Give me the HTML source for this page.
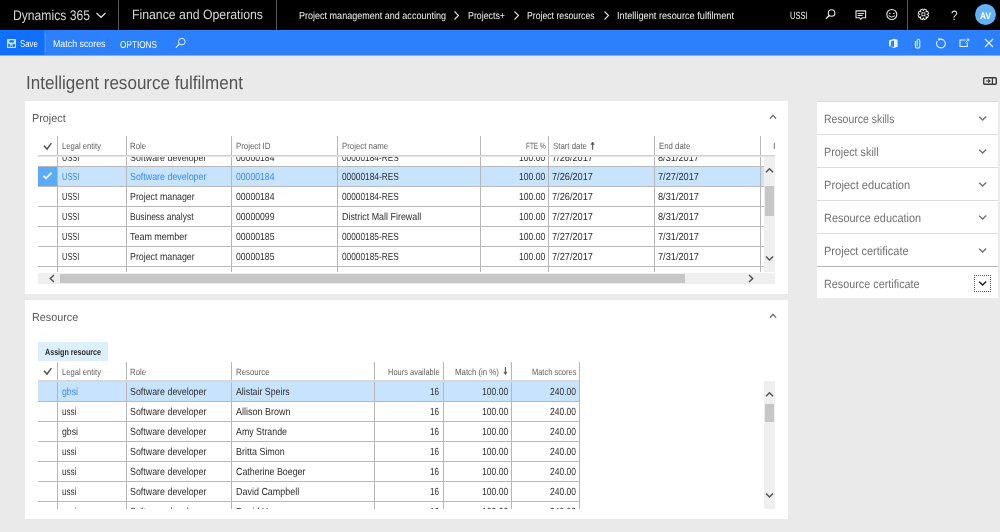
<!DOCTYPE html>
<html><head><meta charset="utf-8"><style>
html,body{margin:0;padding:0;width:1000px;height:532px;overflow:hidden;background:#eaeaea}
body{position:relative;font-family:"Liberation Sans", sans-serif;}
span{position:absolute;white-space:pre;text-rendering:geometricPrecision;}
.c{position:absolute;overflow:hidden}
</style></head><body>
<div id="root" style="position:absolute;left:0;top:0;width:1000px;height:532px;background:#eaeaea;overflow:hidden;will-change:transform">
<div style="position:absolute;left:0px;top:0px;width:1000px;height:30px;background:#000;"></div>
<span style="left:12.70px;top:8px;font-size:14px;line-height:15.638px;color:#d8d8d8;transform:scaleX(0.8681);transform-origin:0 0;">Dynamics 365</span>
<svg style="position:absolute;left:95px;top:11px" width="12" height="8"><path d="M1.5 2 L6 6.3 L10.5 2" stroke="#e0e0e0" stroke-width="1.2" fill="none"/></svg>
<div style="position:absolute;left:118px;top:0px;width:1px;height:30px;background:#5a5a5a;"></div>
<span style="left:132.00px;top:7px;font-size:13.5px;line-height:15.079px;color:#d8d8d8;transform:scaleX(0.9091);transform-origin:0 0;">Finance and Operations</span>
<div style="position:absolute;left:276px;top:0px;width:1px;height:30px;background:#5a5a5a;"></div>
<span style="left:298.70px;top:11px;font-size:10.25px;line-height:11.449px;color:#f0f0f0;transform:scaleX(0.8805);transform-origin:0 0;">Project management and accounting</span>
<svg style="position:absolute;left:453px;top:10px" width="8" height="11"><path d="M1.5 1.5 L5.5 5.5 L1.5 9.5" stroke="#e0e0e0" stroke-width="1.1" fill="none"/></svg>
<span style="left:467.70px;top:11px;font-size:10.25px;line-height:11.449px;color:#f0f0f0;transform:scaleX(0.8602);transform-origin:0 0;">Projects+</span>
<svg style="position:absolute;left:513px;top:10px" width="8" height="11"><path d="M1.5 1.5 L5.5 5.5 L1.5 9.5" stroke="#e0e0e0" stroke-width="1.1" fill="none"/></svg>
<span style="left:527.30px;top:11px;font-size:10.25px;line-height:11.449px;color:#f0f0f0;transform:scaleX(0.8475);transform-origin:0 0;">Project resources</span>
<svg style="position:absolute;left:603px;top:10px" width="8" height="11"><path d="M1.5 1.5 L5.5 5.5 L1.5 9.5" stroke="#e0e0e0" stroke-width="1.1" fill="none"/></svg>
<span style="left:617.00px;top:11px;font-size:10.25px;line-height:11.449px;color:#f0f0f0;transform:scaleX(0.8968);transform-origin:0 0;">Intelligent resource fulfilment</span>
<span style="left:790.00px;top:11px;font-size:10.5px;line-height:11.729px;color:#f0f0f0;transform:scaleX(0.7138);transform-origin:0 0;">USSI</span>
<svg style="position:absolute;left:824px;top:7px" width="14" height="15"><circle cx="7.6" cy="6" r="3.3" stroke="#e8e8e8" stroke-width="1.1" fill="none"/><path d="M5.2 8.5 L2 11.8" stroke="#e8e8e8" stroke-width="1.3"/></svg>
<svg style="position:absolute;left:853px;top:8px" width="16" height="14"><path d="M3 2.9 H12.6 V9.7 H9.3 L7.8 11.3 L6.3 9.7 H3 Z" stroke="#e8e8e8" stroke-width="1.1" fill="none"/><path d="M4.6 5.6 H11 M4.6 7.5 H9.6" stroke="#e8e8e8" stroke-width="1"/></svg>
<svg style="position:absolute;left:884px;top:7px" width="16" height="16"><circle cx="7.8" cy="7.5" r="5.0" stroke="#e8e8e8" stroke-width="1.1" fill="none"/><path d="M5.1 6.4 H6.6 M9 6.4 H10.5" stroke="#e8e8e8" stroke-width="1"/><path d="M4.6 8.7 Q7.8 11.6 11 8.7" stroke="#e8e8e8" stroke-width="1" fill="none"/></svg>
<div style="position:absolute;left:907px;top:0px;width:1px;height:30px;background:#5a5a5a;"></div>
<svg style="position:absolute;left:916px;top:7px" width="15" height="15"><g transform="translate(7.4 7.3) rotate(22.5)" stroke="#e8e8e8" fill="none" stroke-width="0.95"><path d="M3.44 -1.37 L5.17 -1.18 L5.17 1.18 L3.44 1.37 L3.40 1.46 L4.49 2.82 L2.82 4.49 L1.46 3.40 L1.37 3.44 L1.18 5.17 L-1.18 5.17 L-1.37 3.44 L-1.46 3.40 L-2.82 4.49 L-4.49 2.82 L-3.40 1.46 L-3.44 1.37 L-5.17 1.18 L-5.17 -1.18 L-3.44 -1.37 L-3.40 -1.46 L-4.49 -2.82 L-2.82 -4.49 L-1.46 -3.40 L-1.37 -3.44 L-1.18 -5.17 L1.18 -5.17 L1.37 -3.44 L1.46 -3.40 L2.82 -4.49 L4.49 -2.82 L3.40 -1.46 Z"/></g><rect x="5.9" y="5.8" width="3" height="3" stroke="#e8e8e8" stroke-width="0.9" fill="none"/></svg>
<span style="left:950.60px;top:8px;font-size:13.5px;line-height:15.079px;color:#e0e0e0;transform:scaleX(0.8782);transform-origin:0 0;">?</span>
<div style="position:absolute;left:975px;top:3.6px;width:21.2px;height:21.2px;border-radius:50%;background:#60b3f8"></div>
<span style="left:979.90px;top:12px;font-size:9.5px;line-height:10.611px;color:#ffffff;font-weight:700;transform:scaleX(0.8880);transform-origin:0 0;">AV</span>
<div style="position:absolute;left:0px;top:30px;width:1000px;height:25px;background:#2c80fb;"></div>
<div style="position:absolute;left:0px;top:30px;width:44px;height:25px;background:#1170fb;"></div>
<div style="position:absolute;left:0px;top:55px;width:1000px;height:1px;background:#7fb0f5;"></div>
<div style="position:absolute;left:45px;top:33px;width:1px;height:20px;background:#4f93f0;"></div>
<svg style="position:absolute;left:7px;top:39px" width="9" height="9"><rect x="0" y="0" width="9" height="9" rx="0.6" fill="#c9dffd"/><rect x="2.3" y="1.3" width="4.6" height="2.3" rx="0.8" fill="#1170fb"/><rect x="1.2" y="4.9" width="1.7" height="3.0" fill="#1170fb"/><rect x="5.6" y="4.9" width="2.3" height="3.0" fill="#1170fb"/><rect x="3.4" y="6.5" width="1.6" height="1.4" fill="#1170fb"/></svg>
<span style="left:20.00px;top:39px;font-size:10px;line-height:11.170px;color:#ffffff;transform:scaleX(0.7808);transform-origin:0 0;">Save</span>
<span style="left:52.80px;top:39px;font-size:10px;line-height:11.170px;color:#ffffff;transform:scaleX(0.8828);transform-origin:0 0;">Match scores</span>
<span style="left:119.50px;top:40px;font-size:10px;line-height:11.170px;color:#ffffff;transform:scaleX(0.8219);transform-origin:0 0;">OPTIONS</span>
<svg style="position:absolute;left:174px;top:37px" width="13" height="12"><circle cx="7.8" cy="4.6" r="3.3" stroke="#e6f0fe" stroke-width="1" fill="none"/><path d="M5.4 7 L1.8 10.6" stroke="#e6f0fe" stroke-width="1.1"/></svg>
<svg style="position:absolute;left:888px;top:38px" width="11" height="11"><path d="M1 2.6 L6 0.8 L9.6 1.8 V8.8 L6 10 L1 8.3 L6 8.9 V2.4 L3 3.3 V7.6 L1 8.3 Z" fill="#e8f1fe"/></svg>
<svg style="position:absolute;left:914px;top:38px" width="8" height="11"><path d="M3.2 8.6 V3.2 Q3.2 1.2 4.5 1.2 Q5.8 1.2 5.8 3.2 V8.4 Q5.8 10.1 3.6 10.1 Q1.4 10.1 1.4 8.4 V3" stroke="#e8f1fe" stroke-width="1.05" fill="none"/></svg>
<svg style="position:absolute;left:934px;top:37px" width="14" height="13"><path d="M5.4 2.37 A4.4 4.4 0 1 1 3.09 4.3" stroke="#e8f1fe" stroke-width="1.1" fill="none"/><path d="M4.2 0.9 L6.9 2.3 L4.5 4.0 Z" fill="#e8f1fe"/></svg>
<svg style="position:absolute;left:959px;top:38px" width="11" height="10"><path d="M6.5 2 H1 V8.5 H8.3 V4.5" stroke="#e8f1fe" stroke-width="1.1" fill="none"/><path d="M6.5 4.5 L9.6 1.2 M7.6 1.2 H9.8 V3.2" stroke="#e8f1fe" stroke-width="1" fill="none"/></svg>
<svg style="position:absolute;left:984px;top:38px" width="10" height="10"><path d="M1 1 L9 9 M9 1 L1 9" stroke="#e8f1fe" stroke-width="1.1"/></svg>
<span style="left:26.00px;top:73px;font-size:18.75px;line-height:20.944px;color:#555555;transform:scaleX(0.9092);transform-origin:0 0;">Intelligent resource fulfilment</span>
<svg style="position:absolute;left:982px;top:76px" width="16" height="10"><rect x="1.7" y="1.7" width="12.6" height="6.6" rx="1" stroke="#3a3a3a" stroke-width="1.4" fill="none"/><path d="M10.4 2 V8" stroke="#3a3a3a" stroke-width="1.2"/><path d="M4 5 H7.5 M6.2 3.4 L8 5 L6.2 6.6" stroke="#3a3a3a" stroke-width="1.1" fill="none"/></svg>
<div style="position:absolute;left:817px;top:101px;width:181px;height:197px;background:#ffffff;"></div>
<div style="position:absolute;left:817px;top:101px;width:181px;height:1px;background:#dcdcdc;"></div>
<span style="left:824.00px;top:113px;font-size:12px;line-height:13.404px;color:#727272;transform:scaleX(0.8723);transform-origin:0 0;">Resource skills</span>
<svg style="position:absolute;left:977px;top:115px" width="11" height="8"><path d="M2.2 1.7 L5.6 5.0 L9.2 1.5" stroke="#707070" stroke-width="1.4" fill="none"/></svg>
<div style="position:absolute;left:817px;top:134px;width:181px;height:1px;background:#dcdcdc;"></div>
<span style="left:824.00px;top:146px;font-size:12px;line-height:13.404px;color:#727272;transform:scaleX(0.8997);transform-origin:0 0;">Project skill</span>
<svg style="position:absolute;left:977px;top:148px" width="11" height="8"><path d="M2.2 1.7 L5.6 5.0 L9.2 1.5" stroke="#707070" stroke-width="1.4" fill="none"/></svg>
<div style="position:absolute;left:817px;top:167px;width:181px;height:1px;background:#dcdcdc;"></div>
<span style="left:824.00px;top:179px;font-size:12px;line-height:13.404px;color:#727272;transform:scaleX(0.9306);transform-origin:0 0;">Project education</span>
<svg style="position:absolute;left:977px;top:181px" width="11" height="8"><path d="M2.2 1.7 L5.6 5.0 L9.2 1.5" stroke="#707070" stroke-width="1.4" fill="none"/></svg>
<div style="position:absolute;left:817px;top:200px;width:181px;height:1px;background:#dcdcdc;"></div>
<span style="left:824.00px;top:212px;font-size:12px;line-height:13.404px;color:#727272;transform:scaleX(0.9097);transform-origin:0 0;">Resource education</span>
<svg style="position:absolute;left:977px;top:214px" width="11" height="8"><path d="M2.2 1.7 L5.6 5.0 L9.2 1.5" stroke="#707070" stroke-width="1.4" fill="none"/></svg>
<div style="position:absolute;left:817px;top:233px;width:181px;height:1px;background:#dcdcdc;"></div>
<span style="left:824.00px;top:245px;font-size:12px;line-height:13.404px;color:#727272;transform:scaleX(0.9202);transform-origin:0 0;">Project certificate</span>
<svg style="position:absolute;left:977px;top:247px" width="11" height="8"><path d="M2.2 1.7 L5.6 5.0 L9.2 1.5" stroke="#707070" stroke-width="1.4" fill="none"/></svg>
<div style="position:absolute;left:817px;top:266px;width:181px;height:1px;background:#b4b4b4;"></div>
<span style="left:824.00px;top:278px;font-size:12px;line-height:13.404px;color:#727272;transform:scaleX(0.9015);transform-origin:0 0;">Resource certificate</span>
<svg style="position:absolute;left:977px;top:280px" width="11" height="8"><path d="M2.2 1.7 L5.6 5.0 L9.2 1.5" stroke="#1a1a1a" stroke-width="1.4" fill="none"/></svg>
<div style="position:absolute;left:974px;top:275px;width:17px;height:17px;border:1px dotted #555;box-sizing:border-box"></div>
<div style="position:absolute;left:25px;top:101px;width:763px;height:193px;background:#ffffff;"></div>
<span style="left:32.40px;top:113px;font-size:11.5px;line-height:12.845px;color:#5a5a5a;transform:scaleX(0.9400);transform-origin:0 0;">Project</span>
<svg style="position:absolute;left:768px;top:113px" width="11" height="8"><path d="M1.9 5.6 L5 2.4 L8.1 5.6" stroke="#5e5e5e" stroke-width="1.3" fill="none"/></svg>
<div style="position:absolute;left:25px;top:300px;width:763px;height:219px;background:#ffffff;"></div>
<span style="left:32.40px;top:312px;font-size:11.5px;line-height:12.845px;color:#5a5a5a;transform:scaleX(0.9400);transform-origin:0 0;">Resource</span>
<svg style="position:absolute;left:768px;top:312px" width="11" height="8"><path d="M1.9 5.6 L5 2.4 L8.1 5.6" stroke="#5e5e5e" stroke-width="1.3" fill="none"/></svg>
<div style="position:absolute;left:57px;top:136px;width:1px;height:136px;background:#b6b6b6;"></div>
<div style="position:absolute;left:126px;top:136px;width:1px;height:136px;background:#b6b6b6;"></div>
<div style="position:absolute;left:231px;top:136px;width:1px;height:136px;background:#b6b6b6;"></div>
<div style="position:absolute;left:337px;top:136px;width:1px;height:136px;background:#b6b6b6;"></div>
<div style="position:absolute;left:480px;top:136px;width:1px;height:136px;background:#b6b6b6;"></div>
<div style="position:absolute;left:548px;top:136px;width:1px;height:136px;background:#b6b6b6;"></div>
<div style="position:absolute;left:654px;top:136px;width:1px;height:136px;background:#b6b6b6;"></div>
<div style="position:absolute;left:760px;top:136px;width:1px;height:136px;background:#b6b6b6;"></div>
<svg style="position:absolute;left:42px;top:142px" width="11" height="9"><path d="M2 3.9 L5.1 7 L9.4 1.1" stroke="#555" stroke-width="1.5" fill="none"/></svg>
<span style="left:62.00px;top:141px;font-size:9px;line-height:10.053px;color:#626262;transform:scaleX(0.8470);transform-origin:0 0;">Legal entity</span>
<span style="left:130.00px;top:141px;font-size:9px;line-height:10.053px;color:#626262;transform:scaleX(0.8700);transform-origin:0 0;">Role</span>
<span style="left:236.00px;top:141px;font-size:9px;line-height:10.053px;color:#626262;transform:scaleX(0.8700);transform-origin:0 0;">Project ID</span>
<span style="left:342.00px;top:141px;font-size:9px;line-height:10.053px;color:#626262;transform:scaleX(0.8700);transform-origin:0 0;">Project name</span>
<span style="left:525.60px;top:141px;font-size:9px;line-height:10.053px;color:#626262;transform:scaleX(0.7160);transform-origin:0 0;">FTE %</span>
<span style="left:552.70px;top:141px;font-size:9px;line-height:10.053px;color:#626262;transform:scaleX(0.8700);transform-origin:0 0;">Start date</span>
<svg style="position:absolute;left:589px;top:140px" width="7" height="11"><path d="M3.6 2.6 V9.7" stroke="#585858" stroke-width="1.1" fill="none"/><path d="M1.9 4.4 L3.6 2.0 L5.3 4.4 Z" fill="#585858" stroke="#585858" stroke-width="0.6"/></svg>
<span style="left:659.00px;top:141px;font-size:9px;line-height:10.053px;color:#626262;transform:scaleX(0.8700);transform-origin:0 0;">End date</span>
<span style="left:773.00px;top:141px;font-size:9px;line-height:10.053px;color:#626262;">I</span>
<div class="c" style="left:38px;top:156px;width:726px;height:116px">
<div style="position:absolute;left:0px;top:11px;width:726px;height:19px;background:#c7e3fd;"></div>
<div style="position:absolute;left:0px;top:11px;width:19px;height:19px;background:#5aacf6;"></div>
<svg style="position:absolute;left:4px;top:15px" width="11" height="10"><path d="M1.4 4.8 L4 7.4 L9.6 1.6" stroke="#fff" stroke-width="1.6" fill="none"/></svg>
<div style="position:absolute;left:19px;top:0px;width:1px;height:116px;background:#b6b6b6;"></div>
<div style="position:absolute;left:88px;top:0px;width:1px;height:116px;background:#b6b6b6;"></div>
<div style="position:absolute;left:193px;top:0px;width:1px;height:116px;background:#b6b6b6;"></div>
<div style="position:absolute;left:299px;top:0px;width:1px;height:116px;background:#b6b6b6;"></div>
<div style="position:absolute;left:442px;top:0px;width:1px;height:116px;background:#b6b6b6;"></div>
<div style="position:absolute;left:510px;top:0px;width:1px;height:116px;background:#b6b6b6;"></div>
<div style="position:absolute;left:616px;top:0px;width:1px;height:116px;background:#b6b6b6;"></div>
<div style="position:absolute;left:722px;top:0px;width:1px;height:116px;background:#b6b6b6;"></div>
<div style="position:absolute;left:0px;top:10px;width:726px;height:1px;background:#b8b8b8;"></div>
<span style="left:24.00px;top:-3px;font-size:10.25px;line-height:11.449px;color:#2e2e2e;transform:scaleX(0.7269);transform-origin:0 0;">USSI</span>
<span style="left:92.00px;top:-3px;font-size:10.25px;line-height:11.449px;color:#2e2e2e;transform:scaleX(0.8650);transform-origin:0 0;">Software developer</span>
<span style="left:198.00px;top:-3px;font-size:10.25px;line-height:11.449px;color:#2e2e2e;transform:scaleX(0.8441);transform-origin:0 0;">00000184</span>
<span style="left:304.00px;top:-3px;font-size:10.25px;line-height:11.449px;color:#2e2e2e;transform:scaleX(0.8089);transform-origin:0 0;">00000184-RES</span>
<span style="left:481.30px;top:-3px;font-size:10.25px;line-height:11.449px;color:#2e2e2e;transform:scaleX(0.8355);transform-origin:0 0;">100.00</span>
<span style="left:514.10px;top:-3px;font-size:10.25px;line-height:11.449px;color:#2e2e2e;transform:scaleX(0.8989);transform-origin:0 0;">7/26/2017</span>
<span style="left:620.00px;top:-3px;font-size:10.25px;line-height:11.449px;color:#2e2e2e;transform:scaleX(0.8989);transform-origin:0 0;">8/31/2017</span>
<div style="position:absolute;left:0px;top:30px;width:726px;height:1px;background:#b8b8b8;"></div>
<span style="left:24.00px;top:16px;font-size:10.25px;line-height:11.449px;color:#3a8cf2;transform:scaleX(0.7269);transform-origin:0 0;">USSI</span>
<span style="left:92.00px;top:16px;font-size:10.25px;line-height:11.449px;color:#3a8cf2;transform:scaleX(0.8650);transform-origin:0 0;">Software developer</span>
<span style="left:198.00px;top:16px;font-size:10.25px;line-height:11.449px;color:#3a8cf2;transform:scaleX(0.8441);transform-origin:0 0;">00000184</span>
<span style="left:304.00px;top:16px;font-size:10.25px;line-height:11.449px;color:#2e2e2e;transform:scaleX(0.8089);transform-origin:0 0;">00000184-RES</span>
<span style="left:481.30px;top:16px;font-size:10.25px;line-height:11.449px;color:#2e2e2e;transform:scaleX(0.8355);transform-origin:0 0;">100.00</span>
<span style="left:514.10px;top:16px;font-size:10.25px;line-height:11.449px;color:#2e2e2e;transform:scaleX(0.8989);transform-origin:0 0;">7/26/2017</span>
<span style="left:620.00px;top:16px;font-size:10.25px;line-height:11.449px;color:#2e2e2e;transform:scaleX(0.8989);transform-origin:0 0;">7/27/2017</span>
<div style="position:absolute;left:0px;top:50px;width:726px;height:1px;background:#b8b8b8;"></div>
<span style="left:24.00px;top:36px;font-size:10.25px;line-height:11.449px;color:#2e2e2e;transform:scaleX(0.7269);transform-origin:0 0;">USSI</span>
<span style="left:92.00px;top:36px;font-size:10.25px;line-height:11.449px;color:#2e2e2e;transform:scaleX(0.8602);transform-origin:0 0;">Project manager</span>
<span style="left:198.00px;top:36px;font-size:10.25px;line-height:11.449px;color:#2e2e2e;transform:scaleX(0.8441);transform-origin:0 0;">00000184</span>
<span style="left:304.00px;top:36px;font-size:10.25px;line-height:11.449px;color:#2e2e2e;transform:scaleX(0.8089);transform-origin:0 0;">00000184-RES</span>
<span style="left:481.30px;top:36px;font-size:10.25px;line-height:11.449px;color:#2e2e2e;transform:scaleX(0.8355);transform-origin:0 0;">100.00</span>
<span style="left:514.10px;top:36px;font-size:10.25px;line-height:11.449px;color:#2e2e2e;transform:scaleX(0.8989);transform-origin:0 0;">7/26/2017</span>
<span style="left:620.00px;top:36px;font-size:10.25px;line-height:11.449px;color:#2e2e2e;transform:scaleX(0.8989);transform-origin:0 0;">8/31/2017</span>
<div style="position:absolute;left:0px;top:70px;width:726px;height:1px;background:#b8b8b8;"></div>
<span style="left:24.00px;top:56px;font-size:10.25px;line-height:11.449px;color:#2e2e2e;transform:scaleX(0.7269);transform-origin:0 0;">USSI</span>
<span style="left:92.00px;top:56px;font-size:10.25px;line-height:11.449px;color:#2e2e2e;transform:scaleX(0.8255);transform-origin:0 0;">Business analyst</span>
<span style="left:198.00px;top:56px;font-size:10.25px;line-height:11.449px;color:#2e2e2e;transform:scaleX(0.8441);transform-origin:0 0;">00000099</span>
<span style="left:304.00px;top:56px;font-size:10.25px;line-height:11.449px;color:#2e2e2e;transform:scaleX(0.8691);transform-origin:0 0;">District Mall Firewall</span>
<span style="left:481.30px;top:56px;font-size:10.25px;line-height:11.449px;color:#2e2e2e;transform:scaleX(0.8355);transform-origin:0 0;">100.00</span>
<span style="left:514.10px;top:56px;font-size:10.25px;line-height:11.449px;color:#2e2e2e;transform:scaleX(0.8989);transform-origin:0 0;">7/27/2017</span>
<span style="left:620.00px;top:56px;font-size:10.25px;line-height:11.449px;color:#2e2e2e;transform:scaleX(0.8989);transform-origin:0 0;">8/31/2017</span>
<div style="position:absolute;left:0px;top:90px;width:726px;height:1px;background:#b8b8b8;"></div>
<span style="left:24.00px;top:76px;font-size:10.25px;line-height:11.449px;color:#2e2e2e;transform:scaleX(0.7269);transform-origin:0 0;">USSI</span>
<span style="left:92.00px;top:76px;font-size:10.25px;line-height:11.449px;color:#2e2e2e;transform:scaleX(0.8731);transform-origin:0 0;">Team member</span>
<span style="left:198.00px;top:76px;font-size:10.25px;line-height:11.449px;color:#2e2e2e;transform:scaleX(0.8441);transform-origin:0 0;">00000185</span>
<span style="left:304.00px;top:76px;font-size:10.25px;line-height:11.449px;color:#2e2e2e;transform:scaleX(0.8089);transform-origin:0 0;">00000185-RES</span>
<span style="left:481.30px;top:76px;font-size:10.25px;line-height:11.449px;color:#2e2e2e;transform:scaleX(0.8355);transform-origin:0 0;">100.00</span>
<span style="left:514.10px;top:76px;font-size:10.25px;line-height:11.449px;color:#2e2e2e;transform:scaleX(0.8989);transform-origin:0 0;">7/27/2017</span>
<span style="left:620.00px;top:76px;font-size:10.25px;line-height:11.449px;color:#2e2e2e;transform:scaleX(0.8989);transform-origin:0 0;">7/31/2017</span>
<div style="position:absolute;left:0px;top:110px;width:726px;height:1px;background:#b8b8b8;"></div>
<span style="left:24.00px;top:96px;font-size:10.25px;line-height:11.449px;color:#2e2e2e;transform:scaleX(0.7269);transform-origin:0 0;">USSI</span>
<span style="left:92.00px;top:96px;font-size:10.25px;line-height:11.449px;color:#2e2e2e;transform:scaleX(0.8602);transform-origin:0 0;">Project manager</span>
<span style="left:198.00px;top:96px;font-size:10.25px;line-height:11.449px;color:#2e2e2e;transform:scaleX(0.8441);transform-origin:0 0;">00000185</span>
<span style="left:304.00px;top:96px;font-size:10.25px;line-height:11.449px;color:#2e2e2e;transform:scaleX(0.8089);transform-origin:0 0;">00000185-RES</span>
<span style="left:481.30px;top:96px;font-size:10.25px;line-height:11.449px;color:#2e2e2e;transform:scaleX(0.8355);transform-origin:0 0;">100.00</span>
<span style="left:514.10px;top:96px;font-size:10.25px;line-height:11.449px;color:#2e2e2e;transform:scaleX(0.8989);transform-origin:0 0;">7/27/2017</span>
<span style="left:620.00px;top:96px;font-size:10.25px;line-height:11.449px;color:#2e2e2e;transform:scaleX(0.8989);transform-origin:0 0;">7/31/2017</span>
<div style="position:absolute;left:0px;top:130px;width:726px;height:1px;background:#b8b8b8;"></div>
<span style="left:24.00px;top:116px;font-size:10.25px;line-height:11.449px;color:#2e2e2e;transform:scaleX(0.7269);transform-origin:0 0;">USSI</span>
<span style="left:92.00px;top:116px;font-size:10.25px;line-height:11.449px;color:#2e2e2e;transform:scaleX(0.8255);transform-origin:0 0;">Business analyst</span>
<span style="left:198.00px;top:116px;font-size:10.25px;line-height:11.449px;color:#2e2e2e;transform:scaleX(0.8441);transform-origin:0 0;">00000185</span>
<span style="left:304.00px;top:116px;font-size:10.25px;line-height:11.449px;color:#2e2e2e;transform:scaleX(0.8089);transform-origin:0 0;">00000185-RES</span>
<span style="left:481.30px;top:116px;font-size:10.25px;line-height:11.449px;color:#2e2e2e;transform:scaleX(0.8355);transform-origin:0 0;">100.00</span>
<span style="left:514.10px;top:116px;font-size:10.25px;line-height:11.449px;color:#2e2e2e;transform:scaleX(0.8989);transform-origin:0 0;">7/27/2017</span>
<span style="left:620.00px;top:116px;font-size:10.25px;line-height:11.449px;color:#2e2e2e;transform:scaleX(0.8989);transform-origin:0 0;">7/31/2017</span>
</div>
<div style="position:absolute;left:38px;top:155px;width:737px;height:1px;background:#d2d2d2;"></div>
<div style="position:absolute;left:38px;top:156px;width:737px;height:1px;background:#e4e4e4;"></div>
<div style="position:absolute;left:764px;top:157px;width:11px;height:115px;background:#efefef;"></div>
<div style="position:absolute;left:765px;top:186px;width:9px;height:30px;background:#c6c6c6;"></div>
<svg style="position:absolute;left:765px;top:167px" width="9" height="7"><path d="M1 5.2 L4.5 1.7 L8 5.2" stroke="#555" stroke-width="1.5" fill="none"/></svg>
<svg style="position:absolute;left:765px;top:255px" width="9" height="7"><path d="M1 1.5 L4.5 5 L8 1.5" stroke="#555" stroke-width="1.5" fill="none"/></svg>
<div style="position:absolute;left:38px;top:273px;width:737px;height:11px;background:#efefef;"></div>
<div style="position:absolute;left:60px;top:274px;width:625px;height:9px;background:#c6c6c6;"></div>
<svg style="position:absolute;left:48px;top:274px" width="8" height="9"><path d="M6 1 L2.3 4.5 L6 8" stroke="#555" stroke-width="1.5" fill="none"/></svg>
<svg style="position:absolute;left:747px;top:274px" width="8" height="9"><path d="M2 1 L5.7 4.5 L2 8" stroke="#555" stroke-width="1.5" fill="none"/></svg>
<div style="position:absolute;left:38px;top:342px;width:70px;height:19px;background:#dcefff;"></div>
<span style="left:45.40px;top:347px;font-size:9px;line-height:10.053px;color:#2a2a2a;font-weight:700;transform:scaleX(0.7940);transform-origin:0 0;">Assign resource</span>
<div style="position:absolute;left:57px;top:362px;width:1px;height:147px;background:#b6b6b6;"></div>
<div style="position:absolute;left:126px;top:362px;width:1px;height:147px;background:#b6b6b6;"></div>
<div style="position:absolute;left:231px;top:362px;width:1px;height:147px;background:#b6b6b6;"></div>
<div style="position:absolute;left:374px;top:362px;width:1px;height:147px;background:#b6b6b6;"></div>
<div style="position:absolute;left:443px;top:362px;width:1px;height:147px;background:#b6b6b6;"></div>
<div style="position:absolute;left:511px;top:362px;width:1px;height:147px;background:#b6b6b6;"></div>
<div style="position:absolute;left:579px;top:362px;width:1px;height:147px;background:#b6b6b6;"></div>
<svg style="position:absolute;left:42px;top:367px" width="11" height="9"><path d="M2 3.9 L5.1 7 L9.4 1.1" stroke="#555" stroke-width="1.5" fill="none"/></svg>
<span style="left:62.00px;top:367px;font-size:9px;line-height:10.053px;color:#626262;transform:scaleX(0.8470);transform-origin:0 0;">Legal entity</span>
<span style="left:130.00px;top:367px;font-size:9px;line-height:10.053px;color:#626262;transform:scaleX(0.8700);transform-origin:0 0;">Role</span>
<span style="left:236.00px;top:367px;font-size:9px;line-height:10.053px;color:#626262;transform:scaleX(0.8700);transform-origin:0 0;">Resource</span>
<span style="left:388.00px;top:367px;font-size:9px;line-height:10.053px;color:#626262;transform:scaleX(0.8316);transform-origin:0 0;">Hours available</span>
<span style="left:454.75px;top:367px;font-size:9px;line-height:10.053px;color:#626262;transform:scaleX(0.8700);transform-origin:0 0;">Match (in %)</span>
<svg style="position:absolute;left:503px;top:365px" width="7" height="11"><path d="M2.4 2.1 V8.8" stroke="#585858" stroke-width="1.1" fill="none"/><path d="M0.8 7.2 L2.4 9.5 L4.0 7.2 Z" fill="#585858" stroke="#585858" stroke-width="0.6"/></svg>
<span style="left:532.00px;top:367px;font-size:9px;line-height:10.053px;color:#626262;transform:scaleX(0.8294);transform-origin:0 0;">Match scores</span>
<div class="c" style="left:38px;top:382px;width:541px;height:127px">
<div style="position:absolute;left:0px;top:0px;width:541px;height:19px;background:#c7e3fd;"></div>
<div style="position:absolute;left:19px;top:0px;width:1px;height:127px;background:#b6b6b6;"></div>
<div style="position:absolute;left:88px;top:0px;width:1px;height:127px;background:#b6b6b6;"></div>
<div style="position:absolute;left:193px;top:0px;width:1px;height:127px;background:#b6b6b6;"></div>
<div style="position:absolute;left:336px;top:0px;width:1px;height:127px;background:#b6b6b6;"></div>
<div style="position:absolute;left:405px;top:0px;width:1px;height:127px;background:#b6b6b6;"></div>
<div style="position:absolute;left:473px;top:0px;width:1px;height:127px;background:#b6b6b6;"></div>
<div style="position:absolute;left:0px;top:19px;width:541px;height:1px;background:#b8b8b8;"></div>
<span style="left:24.00px;top:5px;font-size:10.25px;line-height:11.449px;color:#3a8cf2;transform:scaleX(0.8505);transform-origin:0 0;">gbsi</span>
<span style="left:92.00px;top:5px;font-size:10.25px;line-height:11.449px;color:#2e2e2e;transform:scaleX(0.8650);transform-origin:0 0;">Software developer</span>
<span style="left:197.50px;top:5px;font-size:10.25px;line-height:11.449px;color:#2e2e2e;transform:scaleX(0.8571);transform-origin:0 0;">Alistair Speirs</span>
<span style="left:392.00px;top:5px;font-size:10.25px;line-height:11.449px;color:#2e2e2e;transform:scaleX(0.7890);transform-origin:0 0;">16</span>
<span style="left:444.30px;top:5px;font-size:10.25px;line-height:11.449px;color:#2e2e2e;transform:scaleX(0.8355);transform-origin:0 0;">100.00</span>
<span style="left:512.00px;top:5px;font-size:10.25px;line-height:11.449px;color:#2e2e2e;transform:scaleX(0.8291);transform-origin:0 0;">240.00</span>
<div style="position:absolute;left:0px;top:39px;width:541px;height:1px;background:#b8b8b8;"></div>
<span style="left:24.00px;top:25px;font-size:10.25px;line-height:11.449px;color:#2e2e2e;transform:scaleX(0.7952);transform-origin:0 0;">ussi</span>
<span style="left:92.00px;top:25px;font-size:10.25px;line-height:11.449px;color:#2e2e2e;transform:scaleX(0.8650);transform-origin:0 0;">Software developer</span>
<span style="left:197.50px;top:25px;font-size:10.25px;line-height:11.449px;color:#2e2e2e;transform:scaleX(0.8791);transform-origin:0 0;">Allison Brown</span>
<span style="left:392.00px;top:25px;font-size:10.25px;line-height:11.449px;color:#2e2e2e;transform:scaleX(0.7890);transform-origin:0 0;">16</span>
<span style="left:444.30px;top:25px;font-size:10.25px;line-height:11.449px;color:#2e2e2e;transform:scaleX(0.8355);transform-origin:0 0;">100.00</span>
<span style="left:512.00px;top:25px;font-size:10.25px;line-height:11.449px;color:#2e2e2e;transform:scaleX(0.8291);transform-origin:0 0;">240.00</span>
<div style="position:absolute;left:0px;top:59px;width:541px;height:1px;background:#b8b8b8;"></div>
<span style="left:24.00px;top:45px;font-size:10.25px;line-height:11.449px;color:#2e2e2e;transform:scaleX(0.8505);transform-origin:0 0;">gbsi</span>
<span style="left:92.00px;top:45px;font-size:10.25px;line-height:11.449px;color:#2e2e2e;transform:scaleX(0.8650);transform-origin:0 0;">Software developer</span>
<span style="left:197.50px;top:45px;font-size:10.25px;line-height:11.449px;color:#2e2e2e;transform:scaleX(0.8608);transform-origin:0 0;">Amy Strande</span>
<span style="left:392.00px;top:45px;font-size:10.25px;line-height:11.449px;color:#2e2e2e;transform:scaleX(0.7890);transform-origin:0 0;">16</span>
<span style="left:444.30px;top:45px;font-size:10.25px;line-height:11.449px;color:#2e2e2e;transform:scaleX(0.8355);transform-origin:0 0;">100.00</span>
<span style="left:512.00px;top:45px;font-size:10.25px;line-height:11.449px;color:#2e2e2e;transform:scaleX(0.8291);transform-origin:0 0;">240.00</span>
<div style="position:absolute;left:0px;top:79px;width:541px;height:1px;background:#b8b8b8;"></div>
<span style="left:24.00px;top:65px;font-size:10.25px;line-height:11.449px;color:#2e2e2e;transform:scaleX(0.7952);transform-origin:0 0;">ussi</span>
<span style="left:92.00px;top:65px;font-size:10.25px;line-height:11.449px;color:#2e2e2e;transform:scaleX(0.8650);transform-origin:0 0;">Software developer</span>
<span style="left:197.50px;top:65px;font-size:10.25px;line-height:11.449px;color:#2e2e2e;transform:scaleX(0.8741);transform-origin:0 0;">Britta Simon</span>
<span style="left:392.00px;top:65px;font-size:10.25px;line-height:11.449px;color:#2e2e2e;transform:scaleX(0.7890);transform-origin:0 0;">16</span>
<span style="left:444.30px;top:65px;font-size:10.25px;line-height:11.449px;color:#2e2e2e;transform:scaleX(0.8355);transform-origin:0 0;">100.00</span>
<span style="left:512.00px;top:65px;font-size:10.25px;line-height:11.449px;color:#2e2e2e;transform:scaleX(0.8291);transform-origin:0 0;">240.00</span>
<div style="position:absolute;left:0px;top:99px;width:541px;height:1px;background:#b8b8b8;"></div>
<span style="left:24.00px;top:85px;font-size:10.25px;line-height:11.449px;color:#2e2e2e;transform:scaleX(0.7952);transform-origin:0 0;">ussi</span>
<span style="left:92.00px;top:85px;font-size:10.25px;line-height:11.449px;color:#2e2e2e;transform:scaleX(0.8650);transform-origin:0 0;">Software developer</span>
<span style="left:197.50px;top:85px;font-size:10.25px;line-height:11.449px;color:#2e2e2e;transform:scaleX(0.8650);transform-origin:0 0;">Catherine Boeger</span>
<span style="left:392.00px;top:85px;font-size:10.25px;line-height:11.449px;color:#2e2e2e;transform:scaleX(0.7890);transform-origin:0 0;">16</span>
<span style="left:444.30px;top:85px;font-size:10.25px;line-height:11.449px;color:#2e2e2e;transform:scaleX(0.8355);transform-origin:0 0;">100.00</span>
<span style="left:512.00px;top:85px;font-size:10.25px;line-height:11.449px;color:#2e2e2e;transform:scaleX(0.8291);transform-origin:0 0;">240.00</span>
<div style="position:absolute;left:0px;top:119px;width:541px;height:1px;background:#b8b8b8;"></div>
<span style="left:24.00px;top:105px;font-size:10.25px;line-height:11.449px;color:#2e2e2e;transform:scaleX(0.7952);transform-origin:0 0;">ussi</span>
<span style="left:92.00px;top:105px;font-size:10.25px;line-height:11.449px;color:#2e2e2e;transform:scaleX(0.8650);transform-origin:0 0;">Software developer</span>
<span style="left:197.50px;top:105px;font-size:10.25px;line-height:11.449px;color:#2e2e2e;transform:scaleX(0.8734);transform-origin:0 0;">David Campbell</span>
<span style="left:392.00px;top:105px;font-size:10.25px;line-height:11.449px;color:#2e2e2e;transform:scaleX(0.7890);transform-origin:0 0;">16</span>
<span style="left:444.30px;top:105px;font-size:10.25px;line-height:11.449px;color:#2e2e2e;transform:scaleX(0.8355);transform-origin:0 0;">100.00</span>
<span style="left:512.00px;top:105px;font-size:10.25px;line-height:11.449px;color:#2e2e2e;transform:scaleX(0.8291);transform-origin:0 0;">240.00</span>
<div style="position:absolute;left:0px;top:139px;width:541px;height:1px;background:#b8b8b8;"></div>
<span style="left:24.00px;top:125px;font-size:10.25px;line-height:11.449px;color:#2e2e2e;transform:scaleX(0.7952);transform-origin:0 0;">ussi</span>
<span style="left:92.00px;top:125px;font-size:10.25px;line-height:11.449px;color:#2e2e2e;transform:scaleX(0.8650);transform-origin:0 0;">Software developer</span>
<span style="left:197.50px;top:125px;font-size:10.25px;line-height:11.449px;color:#2e2e2e;transform:scaleX(0.8855);transform-origin:0 0;">David Hoover</span>
<span style="left:392.00px;top:125px;font-size:10.25px;line-height:11.449px;color:#2e2e2e;transform:scaleX(0.7890);transform-origin:0 0;">16</span>
<span style="left:444.30px;top:125px;font-size:10.25px;line-height:11.449px;color:#2e2e2e;transform:scaleX(0.8355);transform-origin:0 0;">100.00</span>
<span style="left:512.00px;top:125px;font-size:10.25px;line-height:11.449px;color:#2e2e2e;transform:scaleX(0.8291);transform-origin:0 0;">240.00</span>
</div>
<div style="position:absolute;left:38px;top:380px;width:541px;height:2px;background:#d8d8d8;"></div>
<div style="position:absolute;left:764px;top:381px;width:11px;height:128px;background:#efefef;"></div>
<div style="position:absolute;left:765px;top:404px;width:9px;height:18px;background:#c6c6c6;"></div>
<svg style="position:absolute;left:765px;top:391px" width="9" height="7"><path d="M1 5.2 L4.5 1.7 L8 5.2" stroke="#555" stroke-width="1.5" fill="none"/></svg>
<svg style="position:absolute;left:765px;top:492px" width="9" height="7"><path d="M1 1.5 L4.5 5 L8 1.5" stroke="#555" stroke-width="1.5" fill="none"/></svg>
</div>
</body></html>
